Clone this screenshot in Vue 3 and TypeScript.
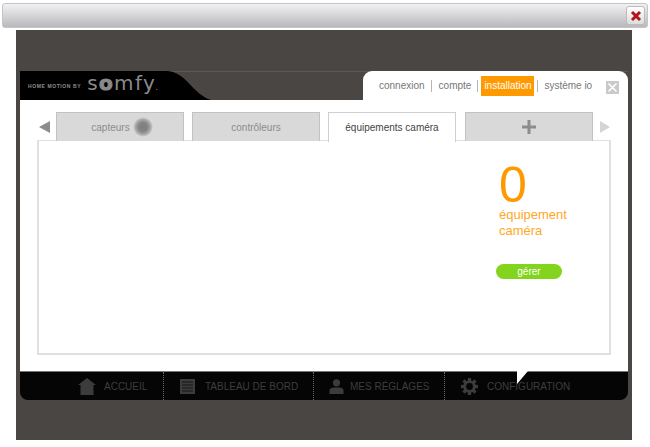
<script setup lang="ts">
const navItems = [
  { label: 'connexion', active: false },
  { label: 'compte', active: false },
  { label: 'installation', active: true },
  { label: 'système io', active: false },
]

const footerItems = [
  { label: 'ACCUEIL', icon: 'home', cls: 'f-home' },
  { label: 'TABLEAU DE BORD', icon: 'board', cls: 'f-board' },
  { label: 'MES RÉGLAGES', icon: 'user', cls: 'f-user' },
  { label: 'CONFIGURATION', icon: 'gear', cls: 'f-gear' },
]

const gearTeeth = [0, 45, 90, 135]
</script>

<template>
  <div class="page">
    <div class="topbar">
      <button class="close">
        <svg width="12" height="12" viewBox="0 0 12 12">
          <path d="M2 2 L10 10 M10 2 L2 10" stroke="#b3131b" stroke-width="3" />
        </svg>
      </button>
    </div>

    <div class="frame">
      <div class="app">
        <header class="head">
          <div class="logo-area">
            <svg class="logo-bg" width="344" height="29" viewBox="0 0 344 29">
              <path d="M0 0 H146 C166 0 172 23 191 29 H0 Z" fill="#000" />
            </svg>
            <span class="tagline">HOME MOTION BY</span>
            <span class="brand">s<b>o</b>mfy<i>.</i></span>
          </div>
          <nav class="nav">
            <template v-for="(item, i) in navItems" :key="item.label">
              <span class="sep" v-if="i > 0"></span>
              <span class="nav-item" :class="{ active: item.active }">{{ item.label }}</span>
            </template>
            <span class="nav-x">
              <svg width="13" height="13" viewBox="0 0 13 13">
                <rect width="13" height="13" fill="#c9c9c9" />
                <path d="M2.5 2.5 L10.5 10.5 M10.5 2.5 L2.5 10.5" stroke="#fff" stroke-width="1.6" />
              </svg>
            </span>
          </nav>
        </header>

        <main class="body">
          <div class="tabs">
            <span class="arrow left"></span>
            <div class="tab">capteurs <span class="blob"></span></div>
            <div class="tab">contrôleurs</div>
            <div class="tab current">équipements caméra</div>
            <div class="tab plus">
              <svg width="14" height="14" viewBox="0 0 14 14">
                <path d="M7 0 V14 M0 7 H14" stroke="#8c8c8c" stroke-width="3" />
              </svg>
            </div>
            <span class="arrow right"></span>
          </div>
          <section class="content">
            <div class="summary">
              <div class="count">0</div>
              <div class="count-label">équipement<br />caméra</div>
              <div class="manage">gérer</div>
            </div>
          </section>
        </main>

        <footer class="foot">
          <span class="pointer"></span>
          <div v-for="item in footerItems" :key="item.label" class="foot-item" :class="item.cls">
            <svg v-if="item.icon === 'home'" width="18" height="17" viewBox="0 0 18 17">
              <path d="M9 0 L18 7 H15.5 V17 H2.5 V7 H0 Z" fill="#3c3c3c" />
            </svg>
            <svg v-else-if="item.icon === 'board'" width="15" height="15" viewBox="0 0 15 15">
              <rect width="15" height="15" fill="#3c3c3c" />
              <path d="M2 3 H13 M2 6 H13 M2 9 H13 M2 12 H13" stroke="#141414" stroke-width="1" />
            </svg>
            <svg v-else-if="item.icon === 'user'" width="15" height="15" viewBox="0 0 15 15">
              <circle cx="7.5" cy="3.8" r="3.6" fill="#3c3c3c" />
              <path d="M0.5 15 V11.5 C0.5 9 3 8.5 7.5 8.5 C12 8.5 14.5 9 14.5 11.5 V15 Z" fill="#3c3c3c" />
            </svg>
            <svg v-else width="17" height="17" viewBox="0 0 17 17">
              <circle cx="8.5" cy="8.5" r="4.8" fill="none" stroke="#3c3c3c" stroke-width="3" />
              <rect
                v-for="a in gearTeeth"
                :key="a"
                x="6.9"
                y="0"
                width="3.2"
                height="17"
                fill="#3c3c3c"
                :transform="`rotate(${a} 8.5 8.5)`"
              />
              <circle cx="8.5" cy="8.5" r="3.4" fill="#050505" />
            </svg>
            <span class="foot-label">{{ item.label }}</span>
          </div>
        </footer>
      </div>
    </div>
  </div>
</template>

<style scoped>
.page {
  width: 650px;
  height: 447px;
  padding-top: 3px;
  box-sizing: border-box;
  background: #fff;
  font-family: "Liberation Sans", Arial, sans-serif;
  overflow: hidden;
}
.topbar {
  height: 25px;
  margin: 0 2px;
  box-sizing: border-box;
  border: 1px solid #c4c4c6;
  border-radius: 3px;
  background: linear-gradient(#f1f1f3, #b9b9bd);
  display: flex;
  justify-content: flex-end;
  align-items: center;
  padding-right: 2px;
}
.close {
  width: 19px;
  height: 19px;
  padding: 0;
  border: 1px solid #bbb;
  border-radius: 3px;
  background: linear-gradient(#fff, #dcdcdc);
  display: flex;
  align-items: center;
  justify-content: center;
}
.frame {
  width: 616px;
  height: 410px;
  margin: 2px 0 0 16px;
  padding: 41px 4px 0;
  box-sizing: border-box;
  background: #4a4643;
}
.app {
  position: relative;
  width: 608px;
}
.head {
  height: 29px;
  display: flex;
  justify-content: space-between;
  border-top: 1px solid #5c5856;
  box-sizing: border-box;
}
.logo-area {
  position: relative;
  width: 343px;
  height: 29px;
  margin-top: -1px;
  display: flex;
  align-items: center;
  color: #8a8a8a;
}
.logo-bg {
  position: absolute;
  left: 0;
  top: 0;
}
.tagline {
  position: relative;
  margin-left: 8px;
  font-size: 5px;
  font-weight: 700;
  letter-spacing: 0.6px;
  white-space: nowrap;
  color: #8e8e8e;
}
.brand {
  position: relative;
  margin-left: 6px;
  font-family: "DejaVu Sans", sans-serif;
  font-size: 20px;
  letter-spacing: 1.4px;
  line-height: 29px;
  color: #8a8a8a;
  white-space: nowrap;
}
.brand b {
  font-weight: 700;
  -webkit-text-stroke: 1px #8a8a8a;
}
.brand i {
  font-style: normal;
  font-size: 9px;
  margin-left: -1px;
}
.nav {
  width: 265px;
  height: 29px;
  margin-top: -1px;
  box-sizing: border-box;
  padding: 5px 0 0 16px;
  background: #fff;
  border-radius: 9px 9px 0 0;
  display: flex;
  align-items: flex-start;
  font-size: 10px;
  color: #777;
}
.nav-item {
  height: 20px;
  line-height: 20px;
  white-space: nowrap;
}
.nav-item.active {
  background: #ff9900;
  color: #fff;
  padding: 0 3px 0 3px;
  width: 53px;
  box-sizing: border-box;
  text-align: center;
  margin-left: -4px;
}
.sep {
  width: 1px;
  height: 12px;
  margin: 4px 7px 0 6px;
  background: #b5b5b5;
}
.nav-item.active + .sep {
  margin: 4px 6px 0 3px;
}
.nav-x {
  margin: 5px 0 0 14px;
  height: 13px;
  line-height: 0;
}
.body {
  height: 271px;
  background: #fff;
  padding: 12px 17px 0;
  box-sizing: border-box;
}
.tabs {
  height: 28px;
  display: flex;
  align-items: flex-start;
  position: relative;
}
.tab {
  width: 128px;
  height: 29px;
  margin-right: 8px;
  box-sizing: border-box;
  border: 1px solid #c2c2c2;
  border-bottom: 0;
  background: #d9d9d9;
  display: flex;
  align-items: center;
  justify-content: center;
  gap: 3px;
  font-size: 10px;
  color: #8c8c8c;
}
.tab.current {
  position: relative;
  z-index: 1;
  background: #fff;
  color: #444;
  border-color: #cfcfcf;
  margin-right: 9px;
  height: 30px;
}
.tab.plus {
  margin-right: 0;
}
.blob {
  width: 20px;
  height: 20px;
  margin-right: -4px;
  border-radius: 50%;
  background: radial-gradient(circle closest-side, #7d7d7d 0, #858585 45%, #a8a8a8 75%, #d9d9d9 100%);
}
.arrow {
  width: 0;
  height: 0;
  border-top: 6px solid transparent;
  border-bottom: 6px solid transparent;
  margin-top: 9px;
}
.arrow.left {
  border-right: 11px solid #8c8c8c;
  margin: 9px 6px 0 2px;
}
.arrow.right {
  border-left: 10px solid #d5d5d5;
  margin-left: 7px;
}
.content {
  width: 574px;
  height: 215px;
  box-sizing: border-box;
  border: 2px solid #e0e0e0;
  border-top-width: 1px;
  display: flex;
  justify-content: flex-end;
}
.summary {
  width: 111px;
  padding-top: 22px;
  box-sizing: border-box;
  color: #ff9900;
}
.count {
  font-size: 50px;
  line-height: 44px;
  margin-left: 1px;
}
.count-label {
  font-size: 13px;
  line-height: 16px;
  color: #ffa726;
  margin-left: 1px;
}
.manage {
  width: 66px;
  height: 15px;
  margin: 25px 0 0 -2px;
  border-radius: 8px;
  background: #82d41c;
  color: #fff;
  font-size: 10px;
  line-height: 15px;
  text-align: center;
}
.foot {
  position: relative;
  height: 29px;
  background: #050505;
  border-radius: 0 0 8px 8px;
  border-top: 1px solid #777;
  box-sizing: border-box;
  display: flex;
  font-size: 10px;
  color: #3e3e3e;
}
.pointer {
  position: absolute;
  left: 497px;
  top: -1px;
  width: 0;
  height: 0;
  border-top: 13px solid #fff;
  border-right: 11px solid transparent;
}
.foot-item {
  height: 28px;
  box-sizing: border-box;
  display: flex;
  align-items: center;
  border-right: 1px dotted #6a6a6a;
}
.foot-label {
  white-space: nowrap;
}
.f-home {
  width: 144px;
  padding-left: 58px;
  gap: 8px;
}
.f-board {
  width: 150px;
  padding-left: 16px;
  gap: 10px;
}
.f-user {
  width: 131px;
  padding-left: 15px;
  gap: 6px;
}
.f-gear {
  padding-left: 16px;
  gap: 9px;
  border-right: 0;
}
</style>
